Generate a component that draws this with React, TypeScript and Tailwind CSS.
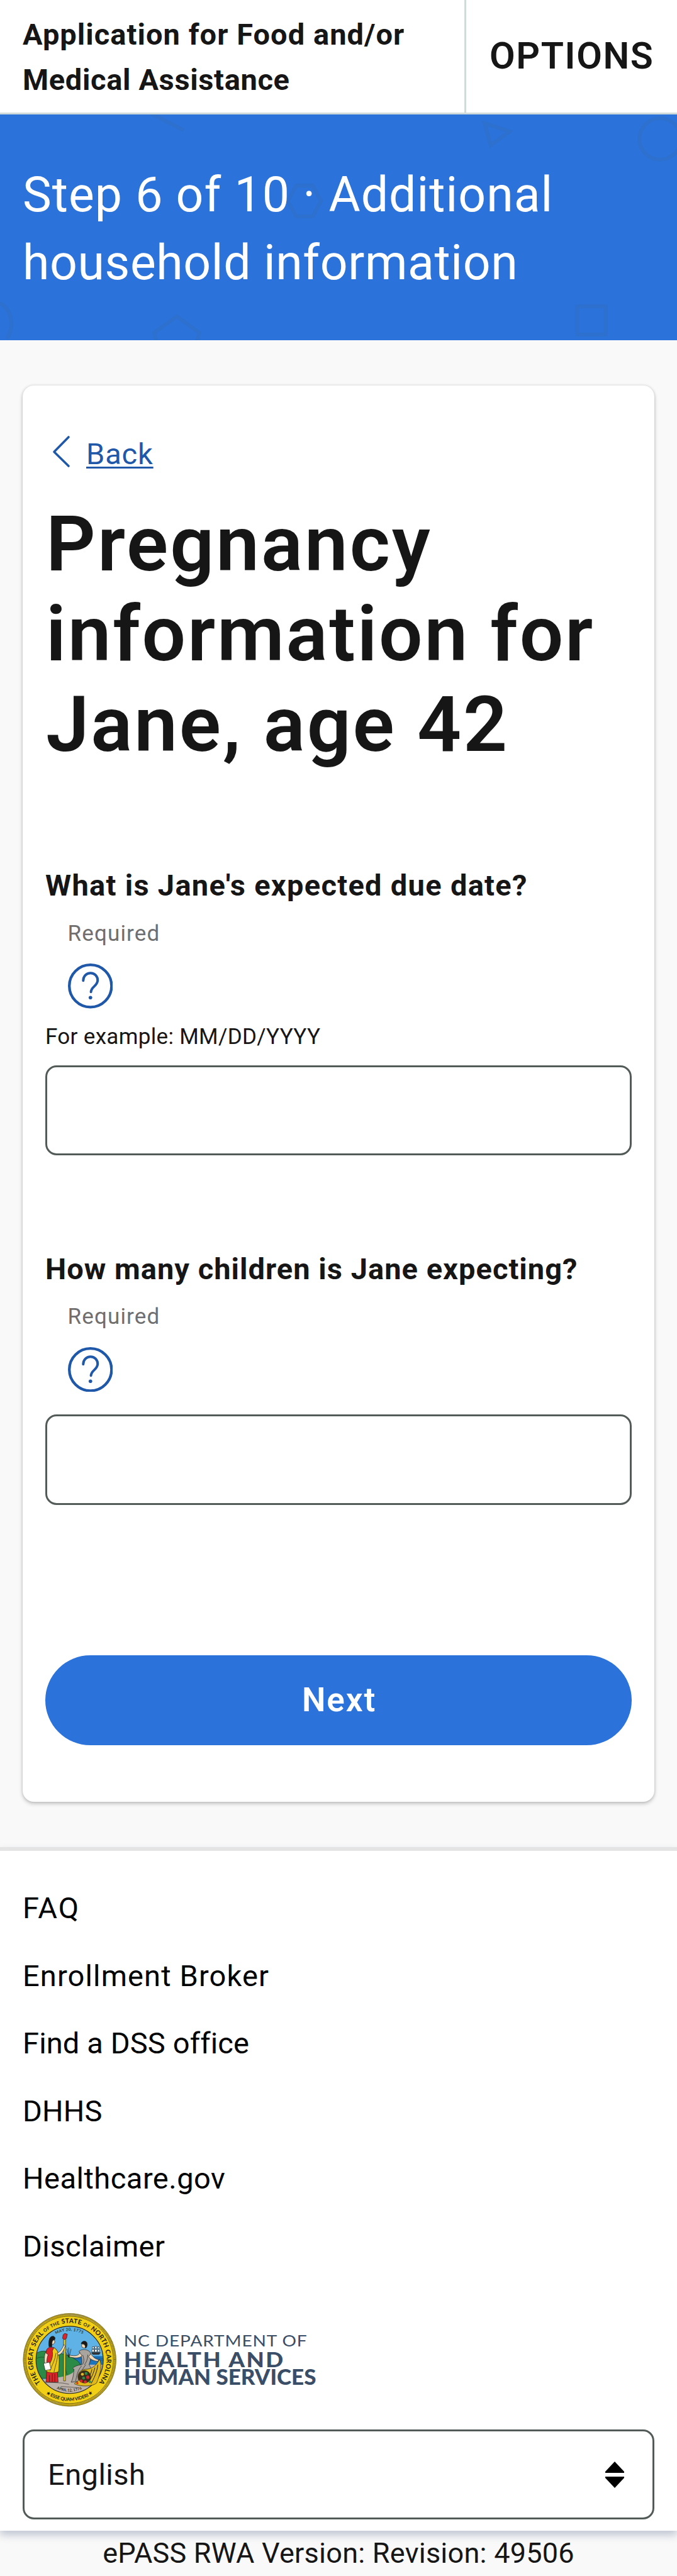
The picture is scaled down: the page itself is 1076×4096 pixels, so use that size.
import React from "react";

const LINKS = [
  { label: "FAQ", cls: "tracking-[2.1px]" },
  { label: "Enrollment Broker", cls: "tracking-[1.14px]" },
  { label: "Find a DSS office", cls: "tracking-[0.15px]" },
  { label: "DHHS", cls: "tracking-[0.2px]" },
  { label: "Healthcare.gov", cls: "tracking-[0.5px]" },
  { label: "Disclaimer", cls: "tracking-[0.48px]" },
];

function BannerShapes() {
  return (
    <svg
      className="absolute inset-0 h-full w-full"
      viewBox="0 0 1080 360"
      preserveAspectRatio="none"
      fill="none"
      stroke="#2d70ce"
      strokeWidth="6"
    >
      <path d="M242 -1 L291 24" strokeLinecap="round" />
      <path d="M459 138 L472.500 113.500 H499 L512 138 L499 162.500 H472.500 Z" />
      <path d="M282 322 L246 348 L251 366 H313 L318 348 Z" />
      <path d="M2 302 C20 313 22 341 12 355" strokeLinecap="round" />
      <path d="M773 14 L813 27 L783 49 Z" />
      <circle cx="1053" cy="39" r="33" />
      <rect x="921" y="306" width="45" height="45" />
      <circle cx="98" cy="114" r="8" fill="#2d70ce" stroke="none" />
      <circle cx="722" cy="241" r="8" fill="#2d70ce" stroke="none" />
    </svg>
  );
}

function HelpIcon() {
  return (
    <svg className="h-[71.5px] w-[71.5px]" viewBox="0 0 215 215" fill="none" stroke="#1f58a8">
      <circle cx="107.500" cy="107.500" r="101" strokeWidth="13" />
      <path
        d="M73 82 C73 60 88 46 108 46 C128 46 142 61 142 80 C142 108 111 110 110 136"
        strokeWidth="12"
        strokeLinecap="round"
      />
      <circle cx="107.500" cy="163" r="8.500" fill="#1f58a8" stroke="none" />
    </svg>
  );
}

function Seal() {
  return (
    <g transform="scale(0.3333) translate(-18 -15)">
      <defs>
        <clipPath id="scene">
          <circle cx="243" cy="239" r="160" />
        </clipPath>
        <path id="ringTop" d="M104 349 A177 177 0 1 1 382 349" />
        <path id="ringBottom" d="M130 400 A197 197 0 0 0 356 400" />
        <path id="dateTop" d="M172 119 A139 139 0 0 1 314 119" />
        <path id="dateBottom" d="M172 373 A152 152 0 0 0 314 373" />
      </defs>
      <circle cx="243" cy="239" r="223" fill="#e9c81c" />
      <circle cx="243" cy="239" r="217" fill="none" stroke="#4a4320" strokeWidth="11" strokeDasharray="2.200 3.800" />
      <circle cx="243" cy="239" r="222" fill="none" stroke="#6b6230" strokeWidth="2" />
      <circle cx="243" cy="239" r="209" fill="#f0cf14" stroke="#3c3718" strokeWidth="2" />
      <g clipPath="url(#scene)">
        <rect x="80" y="75" width="330" height="330" fill="#5fb2e5" />
        <rect x="225" y="221" width="185" height="80" fill="#1c75bd" />
        <path d="M230 226 h160 M240 234 h170 M330 242 h80" stroke="#0f4f8a" strokeWidth="2" />
        <path d="M75 214 C105 188 135 196 160 208 C205 205 235 212 275 240 C292 250 290 262 305 268 L290 320 L75 330 Z" fill="#2b8a45" stroke="#16351d" strokeWidth="2" />
        <path d="M84 232 C105 222 125 226 135 232 M225 222 C215 255 222 290 232 310" fill="none" stroke="#16451f" strokeWidth="2" />
        <path d="M75 345 C130 322 230 330 262 296 L300 262 H410 V410 H75 Z" fill="#bdb3ab" />
        <path d="M120 345 L210 350 L240 356 M200 366 L280 372" stroke="#3a3532" strokeWidth="2" fill="none" />
      </g>
      <circle cx="243" cy="239" r="161" fill="none" stroke="#222" strokeWidth="3.500" />
      <g stroke="#1c1a18" strokeWidth="2" strokeLinejoin="round">
        <path d="M214 140 h10 l-1 200 h-9 Z" fill="#f0cf14" />
        <path d="M209 136 l3 -18 l8 -6 l12 4 l-4 20 l-10 6 Z" fill="#d9252b" />
        <path d="M133 288 L184 288 L188 346 L130 346 Z" fill="#dc2327" />
        <path d="M130 200 C134 178 150 176 166 180 C180 186 186 198 184 214 L180 290 L132 288 C136 260 120 240 130 200 Z" fill="#dc2327" />
        <path d="M168 180 C190 196 198 216 190 296 C168 304 142 302 130 292 C140 264 168 240 160 196 Z" fill="#ecc919" />
        <path d="M178 206 C174 240 158 264 148 294 M186 214 C182 250 172 276 168 298 M146 312 v32 M160 306 v38 M172 306 v38" fill="none" />
        <path d="M184 206 C200 200 206 186 216 166 l6 6 C214 196 206 212 188 216 Z" fill="#f2d9b8" />
        <circle cx="159" cy="152" r="13" fill="#f2d9b8" />
        <path d="M144 176 C140 140 150 124 164 126 C174 128 176 138 170 144 C158 142 158 158 158 176 Z" fill="#1c1a18" />
        <path d="M126 204 C120 226 122 244 124 262 l10 -4 C132 240 136 226 140 214 Z" fill="#f2d9b8" />
        <path d="M118 256 L146 250 L154 284 L126 290 Z" fill="#fff" />
        <path d="M288 198 C300 186 322 188 334 196 C350 204 346 232 336 262 C356 290 344 320 300 340 L250 346 C262 326 262 296 264 284 C246 280 276 264 300 262 C304 240 300 222 288 198 Z" fill="#aaa49f" />
        <path d="M300 268 C280 290 276 320 272 340 M320 262 C300 290 288 310 284 336 M306 216 C314 240 312 250 304 262 M330 214 C330 236 322 252 314 262" fill="none" />
        <path d="M292 204 C286 220 270 222 240 216 l-2 7 C264 232 290 232 302 220 Z" fill="#f2d9b8" />
        <path d="M344 210 C356 226 364 234 382 238 l-4 8 C358 244 342 236 334 224 Z" fill="#f2d9b8" />
        <circle cx="312" cy="170" r="12" fill="#f2d9b8" />
        <path d="M298 162 C302 144 326 146 327 162 C328 174 322 184 318 182 C320 170 314 162 298 162 Z" fill="#1c1a18" />
        <path d="M240 228 l-10 -42 M240 228 l-2 -48 M240 228 l10 -42 M240 228 l-16 -26" fill="none" />
        <path d="M386 236 C400 262 392 300 372 350 C354 366 300 370 266 354 C270 342 284 346 286 336 C274 310 294 284 318 284 C350 284 372 266 386 236 Z" fill="#e0b91c" />
        <path d="M378 262 C374 300 358 330 346 352 M364 276 C358 302 346 326 338 340 M350 284 C346 304 338 318 332 330" fill="none" strokeWidth="3" />
        <circle cx="314" cy="320" r="30" fill="#3b2d1a" />
      </g>
      <g stroke="none">
        <circle cx="304" cy="308" r="7" fill="#e0b91c" />
        <circle cx="322" cy="304" r="7" fill="#2b8a45" />
        <circle cx="330" cy="322" r="8" fill="#d9252b" />
        <circle cx="310" cy="326" r="7" fill="#2b8a45" />
        <circle cx="298" cy="340" r="7" fill="#d9252b" />
        <circle cx="318" cy="344" r="7" fill="#d9252b" />
        <circle cx="280" cy="350" r="5" fill="#d9252b" />
        <circle cx="340" cy="344" r="6" fill="#2b8a45" />
      </g>
      <g stroke="#222" strokeWidth="2" fill="#fff">
        <path d="M352 176 h8 v10 h-8 Z M364 174 h9 v12 h-9 Z M377 176 h8 v10 h-8 Z M350 189 h10 v12 h-10 Z M363 189 h11 v12 h-11 Z M377 189 h9 v12 h-9 Z" />
        <path d="M348 204 H390 L384 213 H354 Z" fill="#333" />
      </g>
      <g fill="#1f1c12" fontFamily="Lato, sans-serif">
        <text fontSize="31" fontWeight="700">
          <textPath href="#ringTop" textLength="790" lengthAdjust="spacing">
            THE GREAT SEAL <tspan fontSize="22">OF THE</tspan> STATE <tspan fontSize="22">OF</tspan> NORTH CAROLINA
          </textPath>
        </text>
        <text fontSize="22" fontWeight="700">
          <textPath href="#ringBottom" textLength="238" lengthAdjust="spacing">★ ESSE QUAM VIDERI ★</textPath>
        </text>
        <text fontSize="19" fontWeight="600">
          <textPath href="#dateTop" startOffset="6" textLength="134" lengthAdjust="spacing">MAY 20, 1775</textPath>
        </text>
        <text fontSize="18" fontWeight="600">
          <textPath href="#dateBottom" startOffset="10" textLength="124" lengthAdjust="spacing">APRIL 12, 1776</textPath>
        </text>
      </g>
    </g>
  );
}

function DepartmentLogo() {
  return (
    <svg className="block h-[149.4px] w-[478px]" viewBox="0 0 480 150">
      <Seal />
      <g fill="#3a4f67" fontFamily="Lato, sans-serif">
        <text x="161.500" y="53.300" fontSize="25.500" fontWeight="400" letterSpacing="0.800" textLength="293" lengthAdjust="spacingAndGlyphs">
          NC DEPARTMENT OF
        </text>
        <text x="161.500" y="86" fontSize="33" fontWeight="900" letterSpacing="2.200" textLength="257" lengthAdjust="spacingAndGlyphs">
          HEALTH AND
        </text>
        <text x="161.500" y="114" fontSize="34" fontWeight="900" textLength="307" lengthAdjust="spacingAndGlyphs">
          HUMAN SERVICES
        </text>
      </g>
    </svg>
  );
}

export default function App() {
  return (
    <div className="flex h-[4096px] w-[1076px] flex-col overflow-hidden bg-[#f9f9f9] font-['Roboto',sans-serif] text-[#161616]">
      <header className="flex h-[182px] shrink-0 border-b-[3px] border-[#cfdad9] bg-white">
        <div className="flex-1 pt-[19px] pl-9 text-[47px] leading-[71.7px] font-bold whitespace-nowrap">
          <p className="tracking-[1.05px]">Application for Food and/or</p>
          <p className="tracking-[0.65px]">Medical Assistance</p>
        </div>
        <div className="flex w-[338px] items-center border-l-[3px] border-[#cfdad9] pl-[37px] text-[59px] font-semibold tracking-[1.6px]">
          OPTIONS
        </div>
      </header>

      <section className="relative h-[359px] shrink-0 overflow-hidden bg-[#2b73da]">
        <BannerShapes />
        <h2 className="relative pt-[75px] pl-9 text-[77px] leading-[107.8px] font-normal whitespace-nowrap text-white">
          <span className="block tracking-[1.02px]">Step 6 of 10 · Additional</span>
          <span className="block tracking-[0.6px]">household information</span>
        </h2>
      </section>

      <main className="mx-9 mt-[71.5px] mb-[72px] flex h-[2252.500px] shrink-0 flex-col rounded-[18px] bg-white px-9 pt-[79px] shadow-[0_3px_6px_rgba(0,0,0,0.22),0_0_4px_rgba(0,0,0,0.12)]">
        <a className="flex h-[60px] items-center text-[#1f58a8]">
          <svg className="-mt-[9px] ml-[9px] h-[54px] w-[36px]" viewBox="0 0 36 54" fill="none" stroke="#1f58a8" strokeWidth="3.600" strokeLinecap="round" strokeLinejoin="round">
            <path d="M28 5 L5 28.500 L28 51" />
          </svg>
          <span className="ml-[20px] text-[47px] leading-[60px] tracking-[0.85px] underline decoration-[3px] underline-offset-[4px]">
            Back
          </span>
        </a>

        <h1 className="mt-[42.5px] ml-px text-[123px] leading-[143.4px] font-semibold whitespace-nowrap">
          <span className="block tracking-[3px]">Pregnancy</span>
          <span className="block tracking-[2.74px]">information for</span>
          <span className="block tracking-[2.82px]">Jane, age 42</span>
        </h1>

        <label className="mt-[148px] text-[47px] leading-[72px] font-bold tracking-[1.3px]">
          What is Jane's expected due date?
        </label>
        <div className="ml-[35.5px] flex flex-col">
          <span className="mt-[13.5px] text-[35px] leading-[54px] tracking-[1.15px] text-[#6f6f6f]">Required</span>
          <div className="mt-[20.5px]">
            <HelpIcon />
          </div>
        </div>
        <p className="mt-[18px] text-[35px] leading-[54px] tracking-[0.32px]">For example: MM/DD/YYYY</p>
        <input className="mt-[18px] h-[143.5px] w-full shrink-0 rounded-[18px] border-[3px] border-[#525b58]" />

        <label className="mt-[145px] text-[47px] leading-[72px] font-bold tracking-[1.03px]">
          How many children is Jane expecting?
        </label>
        <div className="ml-[35.5px] flex flex-col">
          <span className="mt-[12.8px] text-[35px] leading-[54px] tracking-[1.15px] text-[#6f6f6f]">Required</span>
          <div className="mt-[20.8px]">
            <HelpIcon />
          </div>
        </div>
        <input className="mt-[36px] h-[143.5px] w-full shrink-0 rounded-[18px] border-[3px] border-[#525b58]" />

        <button className="mt-[239px] h-[143.5px] shrink-0 rounded-full bg-[#2b73da] pl-[2px] text-[53px] font-semibold tracking-[1.9px] text-white">
          Next
        </button>
      </main>

      <footer className="relative flex shrink-0 flex-col border-t-[6px] border-[#e4e4e4] bg-white px-9 pt-[37px] pb-[18px] text-[47px] shadow-[0_7px_12px_rgba(58,79,120,0.3)]">
        <nav className="flex flex-col text-black">
          {LINKS.map((l) => (
            <a key={l.label} className={"h-[107.550px] leading-[107.550px] " + l.cls}>
              {l.label}
            </a>
          ))}
        </nav>
        <div className="mt-[52.5px]">
          <DepartmentLogo />
        </div>
        <div className="mt-[36px] flex h-[143px] items-center justify-between rounded-[18px] border-[3px] border-[#525b58] pt-px pr-[45px] pl-[37px] tracking-[0.47px]">
          English
          <svg className="h-[42px] w-[30px]" viewBox="0 0 30 42" fill="#000">
            <path d="M15 0 L30 16 V18 H0 V16 Z" />
            <path d="M15 42 L30 26 V24 H0 V26 Z" />
          </svg>
        </div>
      </footer>

      <p className="flex-1 text-center text-[45px] leading-[71px] tracking-[0.25px]">ePASS RWA Version: Revision: 49506</p>
    </div>
  );
}
